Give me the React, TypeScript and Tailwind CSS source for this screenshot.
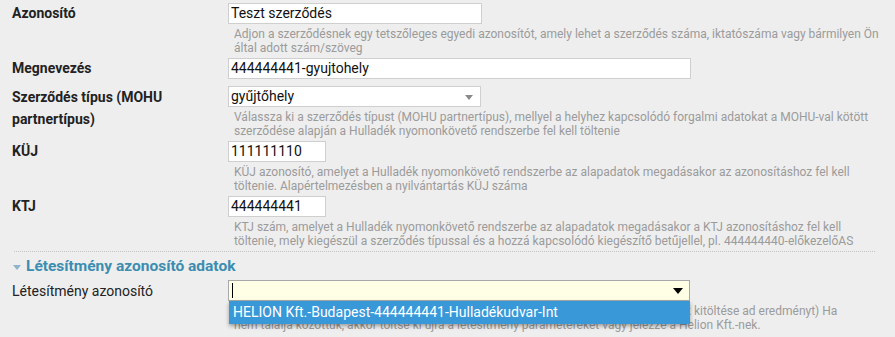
import React from 'react';

const Help: React.FC<{ lines: string[] }> = ({ lines }) => (
  <div className="pl-[6px] pt-[3px] pb-[3px] text-[12px] leading-[14px] text-[#9b9b9b]">
    {lines.map((l, i) => (
      <div key={i} className="whitespace-nowrap">{l}</div>
    ))}
  </div>
);

const Field: React.FC<{ value: string; width: string; select?: boolean }> = ({ value, width, select }) => (
  <div className={`${width} h-[21px] border border-[#cfcfcf] bg-white pl-[2px] pr-[7px] flex items-center justify-between text-[14px] text-[#111]`}>
    <span className="leading-[19px]">{value}</span>
    {select && (
      <svg width="8" height="5" viewBox="0 0 8 5" className="mt-[1px]">
        <path d="M0 0h8L4 5z" fill="#8a8a8a" />
      </svg>
    )}
  </div>
);

export default function App() {
  return (
    <div className="w-[895px] h-[337px] overflow-hidden bg-[#eeeeee] pl-3 pt-[3px] font-[Roboto,sans-serif] text-[#222]">
      <div className="grid grid-cols-[216px_1fr]">
        <div className="text-[14px] font-bold leading-[21px]">Azonosító</div>
        <div>
          <Field value="Teszt szerződés" width="w-[254px]" />
          <Help
            lines={[
              'Adjon a szerződésnek egy tetszőleges egyedi azonosítót, amely lehet a szerződés száma, iktatószáma vagy bármilyen Ön',
              'által adott szám/szöveg',
            ]}
          />
        </div>

        <div className="text-[14px] font-bold leading-[21px]">Megnevezés</div>
        <div className="pb-[7px]">
          <Field value="444444441-gyujtohely" width="w-[463px]" />
        </div>

        <div className="text-[14px] font-bold leading-[22px]">
          Szerződés típus (MOHU
          <br />
          partnertípus)
        </div>
        <div>
          <Field value="gyűjtőhely" width="w-[253px]" select />
          <Help
            lines={[
              'Válassza ki a szerződés típust (MOHU partnertípus), mellyel a helyhez kapcsolódó forgalmi adatokat a MOHU-val kötött',
              'szerződése alapján a Hulladék nyomonkövető rendszerbe fel kell töltenie',
            ]}
          />
        </div>

        <div className="text-[14px] font-bold leading-[21px]">KÜJ</div>
        <div>
          <Field value="111111110" width="w-[98px]" />
          <Help
            lines={[
              'KÜJ azonosító, amelyet a Hulladék nyomonkövető rendszerbe az alapadatok megadásakor az azonosításhoz fel kell',
              'töltenie. Alapértelmezésben a nyilvántartás KÜJ száma',
            ]}
          />
        </div>

        <div className="text-[14px] font-bold leading-[21px]">KTJ</div>
        <div>
          <Field value="444444441" width="w-[98px]" />
          <Help
            lines={[
              'KTJ szám, amelyet a Hulladék nyomonkövető rendszerbe az alapadatok megadásakor a KTJ azonosításhoz fel kell',
              'töltenie, mely kiegészül a szerződés típussal és a hozzá kapcsolódó kiegészítő betűjellel, pl. 444444440-előkezelőAS',
            ]}
          />
        </div>
      </div>

      <div className="ml-[2px] mr-[20px] border-t border-dotted border-[#c4c4c4]" />

      <div className="flex items-center gap-[5px] h-[28px] pt-[2px] text-[#3b8db1] text-[15.5px] font-bold">
        <svg width="8" height="5" viewBox="0 0 8 5" className="ml-[1px]">
          <path d="M0 0h8L4 5z" fill="#8db4c8" />
        </svg>
        <span>Létesítmény azonosító adatok</span>
      </div>

      <div className="grid grid-cols-[216px_1fr]">
        <div className="text-[14px] leading-[22px]">Létesítmény azonosító</div>
        <div>
          <div className="relative w-[462px]">
            <div className="h-[21px] border border-[#a8a8a8] bg-[#ffffe6] pl-[3px] pr-[6px] flex items-center justify-between">
              <span className="w-px h-[15px] bg-black" />
              <svg width="10" height="6" viewBox="0 0 10 6">
                <path d="M0 0h10L5 6z" fill="#000" />
              </svg>
            </div>
            <div className="absolute left-[1px] top-full z-10 w-[461px] h-[23px] bg-[#3898d8] text-white text-[14px] leading-[23px] pl-[4px] shadow-[0_2px_4px_rgba(0,0,0,0.35)]">
              HELION Kft.-Budapest-444444441-Hulladékudvar-Int
            </div>
          </div>
          <Help
            lines={[
              'Válassza ki a listából a létesítményt, amelyhez a szerződés tartozik (a kötelező mezők kitöltése ad eredményt) Ha',
              'nem találja közöttük, akkor töltse ki újra a létesítmény paramétereket vagy jelezze a Helion Kft.-nek.',
            ]}
          />
        </div>
      </div>
    </div>
  );
}
